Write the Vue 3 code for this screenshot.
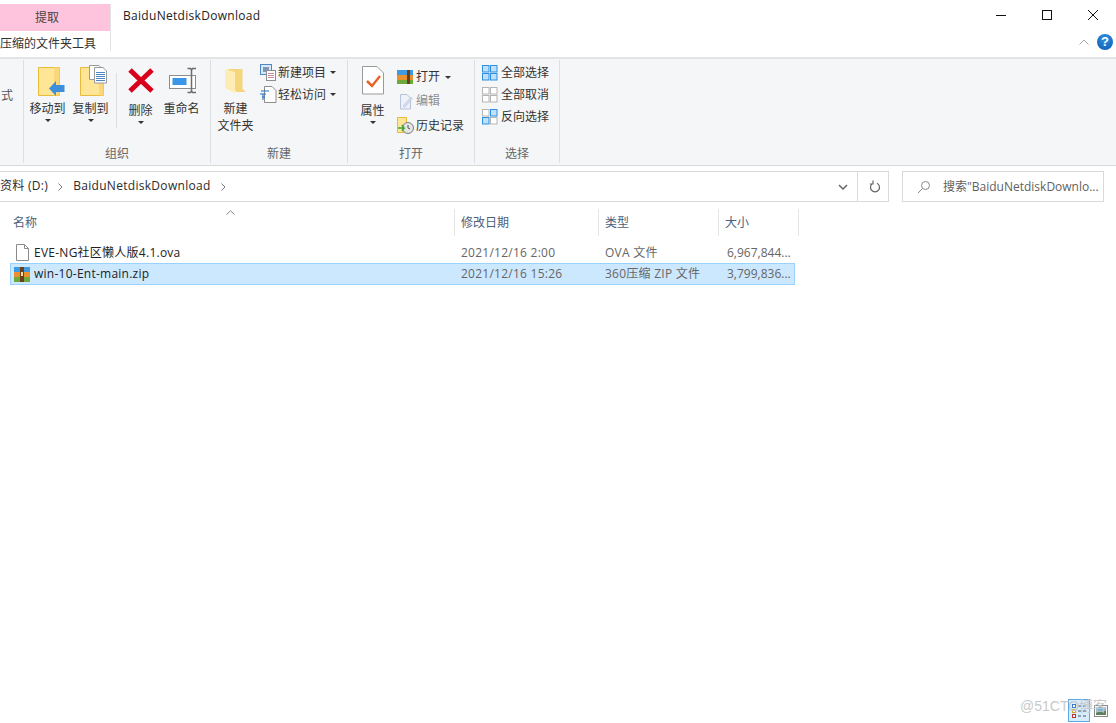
<template>
  <div class="explorer">
    <!-- title bar -->
    <header class="titlebar">
      <div class="tab-col">
        <div class="tab">提取</div>
        <div class="tool-label">压缩的文件夹工具</div>
      </div>
      <div class="title">BaiduNetdiskDownload</div>
      <div class="title-right">
        <div class="win-controls">
          <svg width="12" height="12" viewBox="0 0 12 12"><path d="M1 6.500h10" stroke="#111" fill="none" /></svg>
          <svg width="12" height="12" viewBox="0 0 12 12"><rect x="1.500" y="1.500" width="9" height="9" stroke="#111" fill="none" /></svg>
          <svg width="12" height="12" viewBox="0 0 12 12"><path d="M1 1l10 10M11 1L1 11" stroke="#111" fill="none" /></svg>
        </div>
        <div class="ribbon-help">
          <svg width="10" height="6" viewBox="0 0 10 6"><path d="M.5 5.500L5 1l4.500 4.500" stroke="#aaa" fill="none" /></svg>
          <span class="help">?</span>
        </div>
      </div>
    </header>

    <!-- ribbon -->
    <section class="ribbon">
      <div class="group group-cut">
        <div class="cut-text">式</div>
      </div>

      <div class="group group-org">
        <div class="group-body">
          <div class="big-btn">
            <svg class="big-icon" width="32" height="33" viewBox="0 0 32 33">
              <path d="M6.500 1.500h21v28h-21z" fill="#ffe596" stroke="#e8bb3c" />
              <path d="M22 1.500h5.500v28H22z" fill="#fcd77a" />
              <path d="M17 22.500l7-7.500v4h8.500v7H24v4z" fill="#3d8fde" />
            </svg>
            <span>移动到</span>
            <i class="caret" />
          </div>
          <div class="big-btn">
            <svg class="big-icon" width="32" height="33" viewBox="0 0 32 33">
              <path d="M5.500 1.500h23v28h-23z" fill="#ffe596" stroke="#e8bb3c" />
              <path d="M24 14h4.500v15.500H24z" fill="#fcd77a" />
              <path d="M14.500 -.5H24l3 3v11H14.500z" fill="#fff" stroke="#9a9a9a" />
              <path d="M19.500 1.500H28l3.500 3.500v12h-12z" fill="#fff" stroke="#9a9a9a" />
              <path d="M21 6.500h9M21 8.500h9M21 10.500h9M21 12.500h9M21 14.500h9" stroke="#4f86c6" />
            </svg>
            <span>复制到</span>
            <i class="caret" />
          </div>
          <div class="vsep" />
          <div class="big-btn btn-delete">
            <svg class="big-icon" width="32" height="33" viewBox="0 0 32 33">
              <path d="M5 4l22 21M27 4L5 25" stroke="#d9001b" stroke-width="5" fill="none" />
            </svg>
            <span>删除</span>
            <i class="caret" />
          </div>
          <div class="big-btn btn-rename">
            <svg class="big-icon" width="32" height="33" viewBox="0 0 32 33">
              <rect x="3.500" y="9.500" width="26" height="13" fill="#fff" stroke="#8d8d8d" />
              <rect x="6.500" y="12" width="14" height="7" fill="#3a96e6" />
              <path d="M21.500 2.500h3l1 1.500 1-1.500h3.500M25.500 4v21M21.500 26.500h3l1-1.500 1 1.500h3.500" stroke="#6d6d6d" stroke-width="1.500" fill="none" />
            </svg>
            <span>重命名</span>
          </div>
        </div>
        <div class="group-label">组织</div>
      </div>

      <div class="group group-new">
        <div class="group-body">
          <div class="big-btn btn-folder">
            <svg class="big-icon" width="32" height="33" viewBox="0 0 32 33">
              <path d="M8 3h14.500v20l3.500 3H16z" fill="#f6d67c" />
              <path d="M5 3l10 3v21L5 22z" fill="#fdedb4" />
            </svg>
            <span>新建</span>
            <span>文件夹</span>
          </div>
          <div class="small-col col-new">
            <div class="small-btn">
              <svg width="17" height="17" viewBox="0 0 17 17">
                <rect x=".5" y=".5" width="11" height="10" fill="#d6e9f8" stroke="#4f86c6" />
                <rect x="3" y="3" width="6" height="5" fill="#7d97b5" />
                <rect x="6.500" y="6.500" width="9" height="10" fill="#fff" stroke="#8d8d8d" />
                <path d="M8 9.500h6M8 11.500h6M8 13.500h6" stroke="#c98aa0" />
              </svg>
              <span>新建项目</span>
              <i class="caret" />
            </div>
            <div class="small-btn">
              <svg width="17" height="17" viewBox="0 0 17 17">
                <path d="M4.500 .5H12l4 4v12H4.500z" fill="#fff" stroke="#8d8d8d" />
                <path d="M1 5h8M0 8h6M2 11h3M3 8v6" stroke="#1f6fc4" />
              </svg>
              <span>轻松访问</span>
              <i class="caret" />
            </div>
          </div>
        </div>
        <div class="group-label">新建</div>
      </div>

      <div class="group group-open">
        <div class="group-body">
          <div class="big-btn btn-props">
            <svg class="big-icon" width="32" height="33" viewBox="0 0 32 33">
              <path d="M5.500 .5H20l6.500 6.500v21H5.500z" fill="#fff" stroke="#9a9a9a" />
              <path d="M10 15l5 5 8-10" stroke="#e8622a" stroke-width="2.500" fill="none" />
            </svg>
            <span>属性</span>
            <i class="caret" />
          </div>
          <div class="small-col col-open">
            <div class="small-btn">
              <svg width="17" height="15" viewBox="0 0 17 15">
                <rect y="0" width="16" height="5" fill="#3f9ae0" />
                <rect y="5" width="16" height="5" fill="#e8912d" />
                <rect y="10" width="16" height="4" fill="#6fa83c" />
                <rect x="10" y="0" width="3" height="14" fill="#6a3f1e" />
              </svg>
              <span>打开</span>
              <i class="caret" />
            </div>
            <div class="small-btn disabled">
              <svg width="17" height="17" viewBox="0 0 17 17">
                <path d="M3.500 1.500H10l3.500 3.500v11h-10z" fill="#eef1f7" stroke="#b8c3d8" />
                <path d="M6 13l8-9 1.500 1.500-8 9z" fill="#d3dcec" stroke="#b8c3d8" stroke-width=".6" />
              </svg>
              <span>编辑</span>
            </div>
            <div class="small-btn">
              <svg width="17" height="17" viewBox="0 0 17 17">
                <path d="M.5 .5h9v15h-9z" fill="#ffe596" stroke="#e8bb3c" />
                <circle cx="11" cy="11" r="5.500" fill="#e4e4e4" stroke="#7f7f7f" />
                <path d="M11 8v3l2 1" stroke="#555" fill="none" />
                <path d="M1 11h6l-2-3m2 3l-2 3" stroke="#3ea33a" stroke-width="1.500" fill="none" />
              </svg>
              <span>历史记录</span>
            </div>
          </div>
        </div>
        <div class="group-label">打开</div>
      </div>

      <div class="group group-select">
        <div class="group-body">
          <div class="small-col col-select">
            <div v-for="s in selects" :key="s.text" class="small-btn">
              <svg width="16" height="16" viewBox="0 0 16 16">
                <rect
                  v-for="(c, i) in s.cells"
                  :key="i"
                  :x="i % 2 ? 8.5 : 0.5"
                  :y="i < 2 ? 0.5 : 8.5"
                  width="6.500"
                  height="6.500"
                  :fill="c ? '#bfe0fa' : '#fff'"
                  :stroke="c ? '#2f8fe0' : '#b5b5b5'"
                />
              </svg>
              <span>{{ s.text }}</span>
            </div>
          </div>
        </div>
        <div class="group-label">选择</div>
      </div>
    </section>

    <!-- address bar -->
    <nav class="addressbar">
      <div class="address">
        <span class="crumb">资料 (D:)</span>
        <svg class="crumb-arrow" width="6" height="8" viewBox="0 0 6 8"><path d="M1.500 .5L5 4 1.500 7.500" stroke="#777" fill="none" /></svg>
        <span class="crumb">BaiduNetdiskDownload</span>
        <svg class="crumb-arrow" width="6" height="8" viewBox="0 0 6 8"><path d="M1.500 .5L5 4 1.500 7.500" stroke="#777" fill="none" /></svg>
        <div class="address-end">
          <div class="drop">
            <svg width="10" height="6" viewBox="0 0 10 6"><path d="M1 1l4 4 4-4" stroke="#666" stroke-width="1.500" fill="none" /></svg>
          </div>
          <div class="refresh">
            <svg width="12" height="13" viewBox="0 0 12 13"><path d="M4 3.300a4.500 4.500 0 1 0 4 0M4 .5v3.500H.8" stroke="#666" stroke-width="1.200" fill="none" /></svg>
          </div>
        </div>
      </div>
      <div class="search">
        <svg width="14" height="14" viewBox="0 0 14 14"><circle cx="8.500" cy="5.500" r="4" stroke="#888" fill="none" /><path d="M5.500 8.500L1 13" stroke="#888" fill="none" /></svg>
        <span>搜索"BaiduNetdiskDownlo...</span>
      </div>
    </nav>

    <!-- file list -->
    <main class="list">
      <div class="list-head">
        <div class="col col-name head-name">
          名称
          <svg class="sort" width="9" height="5" viewBox="0 0 9 5"><path d="M.5 4.500L4.500 .8l4 3.700" stroke="#888" fill="none" /></svg>
        </div>
        <div class="col col-date">修改日期</div>
        <div class="col col-type">类型</div>
        <div class="col col-size">大小</div>
      </div>

      <div v-for="f in files" :key="f.name" class="row" :class="{ selected: f.selected }">
        <div class="cell-name">
          <svg v-if="f.kind === 'doc'" width="16" height="17" viewBox="0 0 16 17">
            <path d="M.5 .5H8.500l4 4v12H.5z" fill="#fff" stroke="#8a8a8a" />
            <path d="M8.500 .5v4h4" fill="none" stroke="#8a8a8a" />
          </svg>
          <svg v-else class="zip" width="16" height="15" viewBox="0 0 16 15">
            <rect y="0" width="16" height="5" fill="#3f9ae0" />
            <rect y="5" width="16" height="5" fill="#e8912d" />
            <rect y="10" width="16" height="5" fill="#6fa83c" />
            <rect x="6" y="0" width="4" height="15" fill="#6a3f1e" />
            <rect x="7" y="5" width="2" height="4" fill="#f2d9a0" />
          </svg>
          <span>{{ f.name }}</span>
        </div>
        <div class="cell-date">{{ f.date }}</div>
        <div class="cell-type">{{ f.type }}</div>
        <div class="cell-size">{{ f.size }}</div>
      </div>
    </main>

    <!-- view switch, watermark sits over it -->
    <div class="views">
      <div class="view-btn active">
        <svg width="16" height="16" viewBox="0 0 16 16">
          <rect x="1.500" y="1.500" width="3" height="3" fill="#fff" stroke="#3a7fc4" />
          <rect x="1.500" y="6.500" width="3" height="3" fill="#fff" stroke="#d9a020" />
          <rect x="1.500" y="11.500" width="3" height="3" fill="#fff" stroke="#c83030" />
          <path d="M7 3h3M12 3h3M7 8h3M12 8h3M7 13h3M12 13h3" stroke="#555" />
        </svg>
      </div>
      <svg width="14" height="12" viewBox="0 0 14 12">
        <rect x=".5" y=".5" width="13" height="11" fill="#fff" stroke="#888" />
        <rect x="2" y="2" width="10" height="8" fill="#7fb0d8" />
        <rect x="2" y="6" width="10" height="4" fill="#5f7f5a" />
      </svg>
    </div>
    <div class="watermark">@51CTO博客</div>
  </div>
</template>

<script setup>
const selects = [
  { text: '全部选择', cells: [1, 1, 1, 1] },
  { text: '全部取消', cells: [0, 0, 0, 0] },
  { text: '反向选择', cells: [0, 1, 1, 0] }
]

const files = [
  {
    name: 'EVE-NG社区懒人版4.1.ova',
    date: '2021/12/16 2:00',
    type: 'OVA 文件',
    size: '6,967,844...',
    kind: 'doc'
  },
  {
    name: 'win-10-Ent-main.zip',
    date: '2021/12/16 15:26',
    type: '360压缩 ZIP 文件',
    size: '3,799,836...',
    kind: 'zip',
    selected: true
  }
]
</script>

<style scoped>
.explorer {
  position: relative;
  width: 1116px;
  height: 723px;
  overflow: hidden;
  background: #fff;
  color: #2b2b2b;
  font-family: "Open Sans", "Noto Sans CJK SC", sans-serif;
  font-size: 12px;
  line-height: 16px;
}

.titlebar {
  display: flex;
  height: 57px;
  box-sizing: border-box;
  padding-top: 4px;
}

.tab-col {
  width: 110px;
  flex-shrink: 0;
  border-right: 1px solid #e3e3e3;
  height: 47px;
}

.tab {
  height: 27px;
  padding-right: 16px;
  box-sizing: border-box;
  background: #ffc4dd;
  color: #444;
  text-align: center;
  line-height: 27px;
}

.tool-label {
  height: 20px;
  line-height: 26px;
  white-space: nowrap;
  overflow: hidden;
  color: #333;
}

.title {
  margin-left: 12px;
  padding-top: 4px;
  letter-spacing: 0.3px;
  color: #222;
}

.title-right {
  margin-left: auto;
  width: 160px;
  display: flex;
  flex-direction: column;
}

.win-controls {
  display: flex;
  justify-content: flex-end;
  gap: 34px;
  padding: 5px 17px 0 0;
  height: 22px;
}

.ribbon-help {
  display: flex;
  align-items: center;
  justify-content: flex-end;
  gap: 8px;
  padding-right: 3px;
  margin-top: 3px;
}

.help {
  width: 16px;
  height: 16px;
  border-radius: 50%;
  background: radial-gradient(circle at 50% 30%, #2f8fe0, #0b5cb0);
  color: #fff;
  font-family: "Liberation Sans", sans-serif;
  font-weight: 700;
  font-size: 13px;
  line-height: 16px;
  text-align: center;
}

.ribbon {
  display: flex;
  height: 109px;
  box-sizing: border-box;
  background: #f5f6f7;
  border-top: 2px solid #e4e4e4;
  border-bottom: 1px solid #d8d8d8;
  padding: 1px 0 2px;
}

.group {
  display: flex;
  flex-direction: column;
  flex-shrink: 0;
  box-sizing: border-box;
  border-right: 1px solid #dcdfe3;
}

.group-body {
  flex: 1;
  display: flex;
}

.group-label {
  height: 18px;
  text-align: center;
  color: #666;
  line-height: 18px;
}

.group-cut {
  width: 24px;
}

.cut-text {
  margin-top: 28px;
  margin-left: 1px;
  color: #555;
}

.group-org {
  width: 187px;
}

.group-org .group-body {
  padding-left: 2px;
}

.group-new {
  width: 137px;
}

.group-open {
  width: 127px;
}

.group-select {
  width: 85px;
}

.big-btn {
  width: 43px;
  display: flex;
  flex-direction: column;
  align-items: center;
  padding-top: 6px;
  white-space: nowrap;
  color: #333;
}

.big-btn .big-icon {
  margin-bottom: 2px;
  overflow: visible;
}

.btn-delete {
  margin-left: 2px;
}

.btn-delete > span,
.btn-props > span {
  margin-top: 2px;
}

.btn-rename {
  margin-left: -2px;
}

.btn-folder,
.btn-props {
  margin-left: 3px;
}

.btn-folder > span + span {
  margin-top: 1px;
}

.vsep {
  width: 1px;
  height: 55px;
  margin: 13px 0 0 4px;
  background: #dcdfe3;
}

.caret {
  display: block;
  width: 0;
  height: 0;
  border-left: 3px solid transparent;
  border-right: 3px solid transparent;
  border-top: 3px solid #333;
  margin-top: 2px;
}

.small-col {
  display: flex;
  flex-direction: column;
}

.small-btn {
  display: flex;
  align-items: center;
  gap: 1px;
  white-space: nowrap;
  color: #333;
}

.small-btn .caret {
  margin: 0 0 0 3px;
}

.small-btn.disabled {
  color: #8f8f8f;
}

.col-new {
  padding-top: 4px;
  margin-left: 3px;
  gap: 5px;
}

.col-open {
  padding-top: 9px;
  margin-left: 3px;
  gap: 7.5px;
}

.col-open .small-btn {
  gap: 2px;
}

.col-select {
  padding: 5px 0 0 7px;
  gap: 6px;
}

.col-select .small-btn {
  gap: 3px;
}

.addressbar {
  display: flex;
  margin-top: 5px;
  height: 31px;
}

.address {
  width: 889px;
  box-sizing: border-box;
  border: 1px solid #d9d9d9;
  border-left: none;
  display: flex;
  align-items: center;
  color: #2b2b2b;
}

.crumb {
  letter-spacing: 0.3px;
  padding-bottom: 2px;
}

.crumb-arrow {
  margin: 0 10px 0 9px;
}

.address-end {
  margin-left: auto;
  display: flex;
  height: 100%;
}

.drop {
  width: 29px;
  display: flex;
  align-items: center;
  justify-content: center;
  border-right: 1px solid #d9d9d9;
  padding-left: 2px;
}

.refresh {
  width: 30px;
  display: flex;
  align-items: center;
  justify-content: center;
  padding-left: 3px;
  box-sizing: border-box;
}

.search {
  width: 202px;
  margin-left: 13px;
  box-sizing: border-box;
  border: 1px solid #d9d9d9;
  display: flex;
  align-items: center;
  padding-left: 14px;
  gap: 12px;
  color: #5f5f5f;
  white-space: nowrap;
}

.list {
  padding-top: 7px;
}

.list-head {
  display: flex;
  height: 27px;
  margin-bottom: 6px;
  color: #4c607a;
}

.col {
  box-sizing: border-box;
  display: flex;
  align-items: center;
  border-right: 1px solid #e5e5e5;
  padding-left: 6px;
}

.col-name {
  width: 455px;
  padding-left: 13px;
  position: relative;
}

.sort {
  position: absolute;
  left: 226px;
  top: 1px;
}

.col-date {
  width: 144px;
}

.col-type {
  width: 120px;
}

.col-size {
  width: 80px;
}

.row {
  display: flex;
  align-items: center;
  width: 785px;
  height: 21px;
  margin-left: 10px;
  box-sizing: border-box;
  border: 1px solid transparent;
  color: #666;
  letter-spacing: 0.25px;
}

.row.selected {
  height: 22px;
  background: #cce8ff;
  border-color: #99d1ff;
}

.cell-name {
  width: 445px;
  display: flex;
  align-items: center;
  gap: 2px;
  padding-left: 5px;
  box-sizing: border-box;
  color: #222;
}

.cell-name svg {
  flex-shrink: 0;
}

.cell-name .zip {
  margin-left: -2px;
  margin-right: 2px;
}

.cell-date {
  width: 144px;
  box-sizing: border-box;
  padding-left: 5px;
}

.cell-type {
  width: 120px;
  padding-left: 5px;
  box-sizing: border-box;
}

.cell-size {
  padding-left: 7px;
  letter-spacing: 0;
}

.watermark {
  position: absolute;
  left: 1020px;
  top: 697px;
  color: #c9c9c9;
  font-family: "Liberation Sans", "Noto Sans CJK SC", sans-serif;
  font-size: 14px;
  line-height: 18px;
  white-space: nowrap;
}

.views {
  position: absolute;
  left: 1068px;
  top: 699px;
  display: flex;
  align-items: center;
  gap: 4px;
}

.view-btn {
  width: 22px;
  height: 23px;
  box-sizing: border-box;
  border: 1px solid #5aa9e0;
  background: rgba(204, 232, 255, 0.8);
  display: flex;
  align-items: center;
  justify-content: center;
}
</style>
